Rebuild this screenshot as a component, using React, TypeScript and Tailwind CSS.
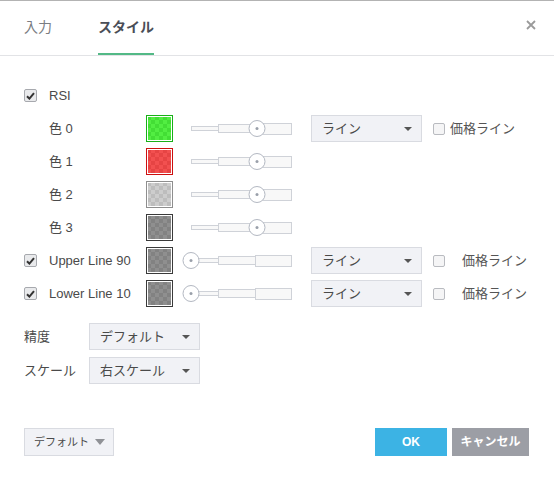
const font = "font-['Liberation_Sans','Noto_Sans_CJK_JP',sans-serif]";

function Check({ checked, size = 13 }: { checked?: boolean; size?: number }) {
  return (
    <span
      className={`flex shrink-0 items-center justify-center rounded-[2px] border ${
        checked ? "border-[#a7a9ae] bg-[#e9eaec]" : "border-[#b9bbc0] bg-[#f5f5f6]"
      } ${size === 13 ? "h-[13px] w-[13px]" : "h-[12px] w-[12px]"}`}
    >
      {checked && (
        <svg width="9" height="8" viewBox="0 0 9 8">
          <path d="M1 4.2 L3.4 6.6 L8 1.2" fill="none" stroke="#333" strokeWidth="2" />
        </svg>
      )}
    </span>
  );
}

function Caret({ big }: { big?: boolean }) {
  return big ? (
    <svg width="10" height="6" viewBox="0 0 10 6">
      <polygon points="0,0 10,0 5,6" fill="#8f9196" />
    </svg>
  ) : (
    <svg width="8" height="4" viewBox="0 0 8 4">
      <polygon points="0,0 8,0 4,4" fill="#555" />
    </svg>
  );
}

function Select({ value }: { value: string }) {
  return (
    <div className="flex h-[27px] w-[111px] shrink-0 items-center justify-between border border-[#d9dbe1] bg-[#f1f2f6] pl-[10px] pr-[9px] text-[13px] text-[#4a4a4a]">
      <span>{value}</span>
      <Caret />
    </div>
  );
}

const swatches: Record<string, string> = {
  green:
    "border-[#18b018] bg-[repeating-conic-gradient(#52ee42_0_25%,#43de35_0_50%)]",
  red: "border-[#cc1010] bg-[repeating-conic-gradient(#f25050_0_25%,#e64444_0_50%)]",
  light:
    "border-[#8e8e8e] bg-[repeating-conic-gradient(#cdcdcd_0_25%,#bdbdbd_0_50%)]",
  dark: "border-[#3a3a3a] bg-[repeating-conic-gradient(#8f8f8f_0_25%,#828282_0_50%)]",
};

function Swatch({ tone }: { tone: string }) {
  return (
    <div
      className={`h-[27px] w-[27px] shrink-0 border bg-[length:8px_8px] shadow-[inset_0_0_0_1px_#fff] ${swatches[tone]}`}
    />
  );
}

function Slider({ pos }: { pos: number }) {
  return (
    <div className="relative ml-[18px] flex h-[27px] w-[101px] shrink-0 items-center">
      <div className="h-[5px] w-[27px] border border-r-0 border-[#cfd2d8] bg-[#f8f8f8]" />
      <div className="h-[9px] w-[37px] border border-r-0 border-[#cfd2d8] bg-[#f8f8f8]" />
      <div className="h-[12px] w-[37px] border border-[#cfd2d8] bg-[#f8f8f8]" />
      <div
        className="absolute top-[5px] flex h-[17px] w-[17px] -translate-x-1/2 items-center justify-center rounded-full border border-[#b3b8c2] bg-white"
        style={{ left: pos }}
      >
        <div className="h-[3px] w-[3px] rounded-full bg-[#9aa0aa]" />
      </div>
    </div>
  );
}

function Row({
  checkbox,
  label,
  tone,
  pos,
  select,
  wide,
}: {
  checkbox?: boolean;
  label: string;
  tone: string;
  pos: number;
  select?: boolean;
  wide?: boolean;
}) {
  return (
    <div className="flex h-[33px] items-center">
      <div className="w-[25px] shrink-0">{checkbox && <Check checked />}</div>
      <div className="w-[97px] shrink-0">{label}</div>
      <Swatch tone={tone} />
      <Slider pos={pos} />
      {select && (
        <>
          <div className="ml-[19px]">
            <Select value="ライン" />
          </div>
          <div className="ml-[11px] flex items-center">
            <Check size={12} />
            <span className={`${wide ? "ml-[17px]" : "ml-[5px]"} text-[#555]`}>価格ライン</span>
          </div>
        </>
      )}
    </div>
  );
}

export default function App() {
  return (
    <div className={`${font} h-[478px] w-[554px] border-t border-[#b3b3b3] bg-white text-[13px] text-[#4a4a4a]`}>
      <div className="flex h-[55px] items-end border-b border-[#e2e3e6] px-6">
        <div className="flex h-full items-center pb-[2px] text-[14px] text-[#7b7d82]">入力</div>
        <div className="ml-[46px] flex h-full flex-col justify-center border-b-2 border-[#53b986] text-[14px] font-bold text-[#4a4e57]">
          スタイル
        </div>
        <div className="-mr-[6px] ml-auto flex h-full items-center pb-[6px]">
          <svg width="10" height="10" viewBox="0 0 10 10">
            <path d="M1 1 L9 9 M9 1 L1 9" stroke="#9a9a9a" strokeWidth="1.8" />
          </svg>
        </div>
      </div>

      <div className="px-6 pt-[23px]">
        <div className="flex h-[33px] items-center">
          <div className="w-[25px]">
            <Check checked />
          </div>
          <span>RSI</span>
        </div>
        <Row label="色 0" tone="green" pos={66} select />
        <Row label="色 1" tone="red" pos={66} />
        <Row label="色 2" tone="light" pos={66} />
        <Row label="色 3" tone="dark" pos={66} />
        <Row checkbox label="Upper Line 90" tone="dark" pos={0} select wide />
        <Row checkbox label="Lower Line 10" tone="dark" pos={0} select wide />

        <div className="mt-[13px] flex flex-col gap-[7px]">
          <div className="flex items-center">
            <div className="w-[65px]">精度</div>
            <Select value="デフォルト" />
          </div>
          <div className="flex items-center">
            <div className="w-[65px]">スケール</div>
            <Select value="右スケール" />
          </div>
        </div>

        <div className="mt-[44px] flex items-center">
          <div className="flex h-[28px] w-[90px] items-center justify-between border border-[#d9dbe1] bg-[#f1f2f6] pl-[9px] pr-[8px] text-[11px] text-[#4a4a4a]">
            <span>デフォルト</span>
            <Caret big />
          </div>
          <div className="ml-auto flex h-[28px] w-[72px] items-center justify-center bg-[#3cb3e4] text-[12px] font-bold text-white">
            OK
          </div>
          <div className="ml-[5px] mr-[1px] flex h-[28px] w-[77px] items-center justify-center bg-[#9c9ea5] text-[12px] font-bold text-white">
            キャンセル
          </div>
        </div>
      </div>
    </div>
  );
}
